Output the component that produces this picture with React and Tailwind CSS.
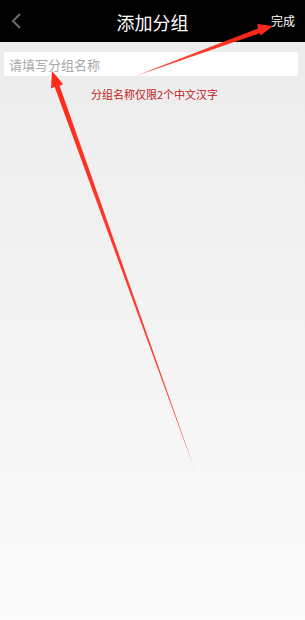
import React from "react";

const cjk = { fontFamily: '"Noto Sans CJK SC", "Noto Sans", sans-serif' };

function Arrows() {
  return (
    <svg
      className="absolute inset-0 pointer-events-none"
      width="305"
      height="620"
      viewBox="0 0 305 620"
    >
      <defs>
        <linearGradient id="fade1" gradientUnits="userSpaceOnUse" x1="197" y1="476" x2="52" y2="72">
          <stop offset="0" stopColor="#ff2a1a" stopOpacity="0" />
          <stop offset="0.06" stopColor="#ff2a1a" stopOpacity="0.85" />
          <stop offset="1" stopColor="#ff2a1a" />
        </linearGradient>
        <linearGradient id="fade2" gradientUnits="userSpaceOnUse" x1="130" y1="78" x2="272" y2="26">
          <stop offset="0" stopColor="#ff2a1a" stopOpacity="0" />
          <stop offset="0.15" stopColor="#ff2a1a" stopOpacity="0.85" />
          <stop offset="1" stopColor="#ff2a1a" />
        </linearGradient>
      </defs>
      <polygon
        fill="url(#fade1)"
        points="52,71 63.2,84.3 59.5,85.6 197,476 54.7,87.0 51.0,88.3"
      />
      <polygon
        fill="url(#fade2)"
        points="273,26 260.5,35.5 259.7,33.2 130,78 258.0,28.5 257.1,24.1"
      />
    </svg>
  );
}

export default function App() {
  return (
    <div
      className="relative w-[305px] h-[620px] overflow-hidden bg-gradient-to-b from-[#ebebeb] to-[#fbfbfb]"
      style={cjk}
    >
      <header className="h-[42px] bg-black flex items-center justify-between px-[8px]">
        <svg width="14" height="18" viewBox="0 0 14 18" className="ml-[2px]">
          <path d="M10 2 L3 9 L10 16" fill="none" stroke="#6b6b6b" strokeWidth="2" />
        </svg>
        <h1 className="absolute left-0 right-0 top-[9px] text-center text-white text-[18px] leading-[26px]">
          添加分组
        </h1>
        <span className="relative text-white text-[12px] leading-none mr-[2px]">完成</span>
      </header>

      <div className="pl-[4px] pr-[7px] pt-[10px]">
        <div className="h-[24px] bg-white flex items-center px-[5px]">
          <span className="text-[13px] text-[#a8a8a8] leading-none">请填写分组名称</span>
        </div>
      </div>

      <p className="mt-[11px] pl-[91px] text-[11px] leading-[14px] text-[#c01818]">
        分组名称仅限2个中文汉字
      </p>

      <Arrows />
    </div>
  );
}
